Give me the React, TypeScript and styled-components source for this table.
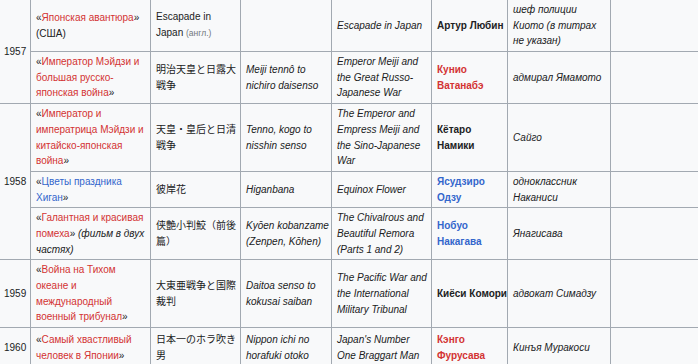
import { Fragment, ReactNode } from "react";
import styled, { createGlobalStyle } from "styled-components";

type Tone = "red" | "blue" | "plain";

const GlobalStyle = createGlobalStyle`
  html, body {
    margin: 0;
    padding: 0;
    overflow: hidden;
    background: #ffffff;
  }
`;

const Table = styled.table`
  table-layout: fixed;
  border-collapse: collapse;
  margin: -1px 0 0 -2px;
  width: 722px;
  background: #f8f9fa;
  color: #202122;
  font-family: "Liberation Sans", Arial, "Noto Sans CJK JP", sans-serif;
  font-size: 10px;
  line-height: 15.68px;
`;

const Cell = styled.td<{ $italic?: boolean; $bold?: boolean }>`
  border: 1px solid #a2a9b1;
  padding: 2px 4px 2px 5px;
  vertical-align: middle;
  white-space: nowrap;
  font-style: ${(p) => (p.$italic ? "italic" : "normal")};
  font-weight: ${(p) => (p.$bold ? "bold" : "normal")};
`;

const Link = styled.span<{ $tone: Tone }>`
  color: ${(p) => (p.$tone === "red" ? "#d33333" : p.$tone === "blue" ? "#3366cc" : "inherit")};
`;

const Small = styled.span`
  font-size: 8.5px;
  color: #72777d;
`;

const Note = styled.i`
  color: #202122;
`;

type Film = {
  year?: { label: string; span: number };
  title: ReactNode;
  orig: ReactNode;
  romaji: string[];
  english: string[];
  actor: { lines: string[]; tone: Tone };
  role: string[];
  height?: number;
};

const Lines = ({ lines }: { lines: string[] }) => (
  <>
    {lines.map((l, i) => (
      <Fragment key={i}>
        {i > 0 && <br />}
        {l}
      </Fragment>
    ))}
  </>
);

const Title = ({ lines, tone, after }: { lines: string[]; tone: Tone; after?: ReactNode }) => (
  <>
    «<Link $tone={tone}><Lines lines={lines} /></Link>»{after}
  </>
);

const films: Film[] = [
  {
    year: { label: "1957", span: 2 },
    title: <Title lines={["Японская авантюра"]} tone="red" after={<><br />(США)</>} />,
    orig: <>Escapade in<br />Japan <Small>(англ.)</Small></>,
    romaji: [],
    english: ["Escapade in Japan"],
    actor: { lines: ["Артур Любин"], tone: "plain" },
    role: ["шеф полиции", "Киото (в титрах", "не указан)"],
  },
  {
    title: <Title lines={["Император Мэйдзи и", "большая русско-", "японская война"]} tone="red" />,
    orig: <Lines lines={["明治天皇と日露大", "戦争"]} />,
    romaji: ["Meiji tennô to", "nichiro daisenso"],
    english: ["Emperor Meiji and", "the Great Russo-", "Japanese War"],
    actor: { lines: ["Кунио", "Ватанабэ"], tone: "red" },
    role: ["адмирал Ямамото"],
  },
  {
    year: { label: "1958", span: 3 },
    title: <Title lines={["Император и", "императрица Мэйдзи и", "китайско-японская", "война"]} tone="red" />,
    orig: <Lines lines={["天皇・皇后と日清", "戦争"]} />,
    romaji: ["Tenno, kogo to", "nisshin senso"],
    english: ["The Emperor and", "Empress Meiji and", "the Sino-Japanese", "War"],
    actor: { lines: ["Кётаро", "Намики"], tone: "plain" },
    role: ["Сайго"],
  },
  {
    title: <Title lines={["Цветы праздника", "Хиган"]} tone="blue" />,
    orig: <Lines lines={["彼岸花"]} />,
    romaji: ["Higanbana"],
    english: ["Equinox Flower"],
    actor: { lines: ["Ясудзиро", "Одзу"], tone: "blue" },
    role: ["одноклассник", "Наканиси"],
  },
  {
    title: (
      <Title
        lines={["Галантная и красивая", "помеха"]}
        tone="red"
        after={<> <Note>(фильм в двух</Note><br /><Note>частях)</Note></>}
      />
    ),
    orig: <Lines lines={["侠艶小判鮫（前後", "篇）"]} />,
    romaji: ["Kyōen kobanzame", "(Zenpen, Kōhen)"],
    english: ["The Chivalrous and", "Beautiful Remora", "(Parts 1 and 2)"],
    actor: { lines: ["Нобуо", "Накагава"], tone: "blue" },
    role: ["Янагисава"],
  },
  {
    year: { label: "1959", span: 1 },
    title: <Title lines={["Война на Тихом", "океане и", "международный", "военный трибунал"]} tone="red" />,
    orig: <Lines lines={["大東亜戦争と国際", "裁判"]} />,
    romaji: ["Daitoa senso to", "kokusai saiban"],
    english: ["The Pacific War and", "the International", "Military Tribunal"],
    actor: { lines: ["Киёси Комори"], tone: "plain" },
    role: ["адвокат Симадзу"],
  },
  {
    year: { label: "1960", span: 1 },
    title: <Title lines={["Самый хвастливый", "человек в Японии"]} tone="red" />,
    orig: <Lines lines={["日本一のホラ吹き", "男"]} />,
    romaji: ["Nippon ichi no", "horafuki otoko"],
    english: ["Japan's Number", "One Braggart Man"],
    actor: { lines: ["Кэнго", "Фурусава"], tone: "red" },
    role: ["Кинъя Муракоси"],
    height: 40,
  },
];

const widths = [32, 120, 90, 91, 100, 76, 103, 110];

export default function App() {
  return (
    <>
      <GlobalStyle />
      <Table>
        <colgroup>
          {widths.map((w, i) => (
            <col key={i} style={{ width: w }} />
          ))}
        </colgroup>
        <tbody>
          {films.map((f, i) => (
            <tr key={i} style={f.height ? { height: f.height } : undefined}>
              {f.year && <Cell rowSpan={f.year.span}>{f.year.label}</Cell>}
              <Cell>{f.title}</Cell>
              <Cell>{f.orig}</Cell>
              <Cell $italic><Lines lines={f.romaji} /></Cell>
              <Cell $italic><Lines lines={f.english} /></Cell>
              <Cell $bold>
                {f.actor.tone === "plain" ? (
                  <Lines lines={f.actor.lines} />
                ) : (
                  <Link $tone={f.actor.tone}><Lines lines={f.actor.lines} /></Link>
                )}
              </Cell>
              <Cell $italic><Lines lines={f.role} /></Cell>
              <Cell />
            </tr>
          ))}
        </tbody>
      </Table>
    </>
  );
}
